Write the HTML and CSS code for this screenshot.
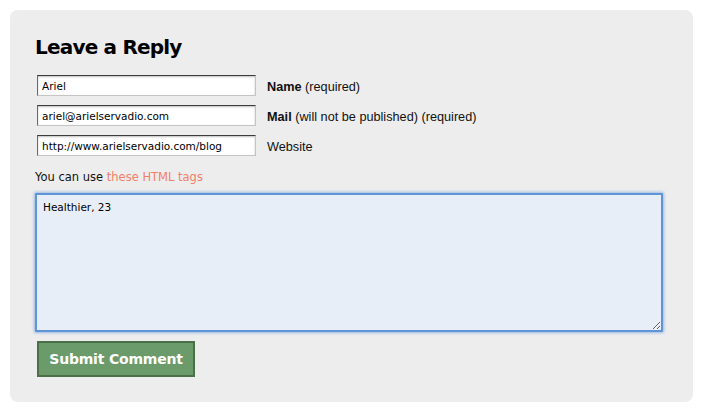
FILE: index.html
```html
<!DOCTYPE html>
<html lang="en">
<head>
    <meta charset="UTF-8">
    <title>Leave a Reply</title>
    <link rel="stylesheet" href="styles.css">
</head>
<body>

<div id="respond" class="respond">
    <h3>Leave a Reply</h3>

    <form class="comment-form">
        <p class="field">
            <input type="text" id="author" value="Ariel">
            <label for="author"><strong>Name</strong> (required)</label>
        </p>
        <p class="field">
            <input type="text" id="email" value="ariel@arielservadio.com">
            <label for="email"><strong>Mail</strong> (will not be published) (required)</label>
        </p>
        <p class="field">
            <input type="text" id="url" value="http://www.arielservadio.com/blog">
            <label for="url">Website</label>
        </p>

        <p class="tags">You can use <a href="#">these HTML tags</a></p>

        <textarea id="comment" class="focused">Healthier, 23</textarea>

        <button type="submit" class="submit-btn">Submit Comment</button>
    </form>
</div>

</body>
</html>
```

FILE: styles.css
```css
body {
    margin: 0;
    padding: 10px 9px 10px 10px;
    background: #fff;
    font-family: "Liberation Sans", Arial, sans-serif;
    font-size: 12.7px;
    color: #111;
}

.respond {
    background: #ededed;
    border-radius: 8px;
    padding: 24px 25px 24px 25px;
    height: 392px;
    box-sizing: border-box;
}

.respond h3 {
    margin: 0 0 15px 0;
    font-family: "DejaVu Sans", sans-serif;
    font-size: 20px;
    line-height: 26px;
    font-weight: bold;
    letter-spacing: -0.8px;
    color: #000;
}

.comment-form {
    margin: 0;
}

.field {
    display: flex;
    align-items: center;
    margin: 0 0 9px 2px;
    height: 21px;
}

.field input {
    width: 219px;
    height: 21px;
    box-sizing: border-box;
    margin: 0;
    padding: 1px 4px 0;
    border: 1px solid #c4c4c4;
    border-top-color: #3c3c3c;
    border-left-color: #6a6a6a;
    box-shadow: inset 0 1px 2px rgba(0, 0, 0, 0.25);
    background: #fff;
    font-family: "DejaVu Sans", sans-serif;
    font-size: 10.5px;
    color: #000;
    outline: none;
}

.field label {
    margin-left: 11px;
    padding-top: 2px;
}

.tags {
    margin: 13px 0 8px 0;
    font-family: "DejaVu Sans", sans-serif;
    font-size: 11.5px;
    line-height: 16px;
    color: #111;
}

.tags a {
    color: #f47e68;
    text-decoration: none;
}

textarea {
    display: block;
    width: 628px;
    height: 139px;
    box-sizing: border-box;
    margin: 0 0 9px 0;
    padding: 5px 6px;
    border: 2px solid #5f95d6;
    border-radius: 1px;
    box-shadow: 0 0 3px 1px rgba(100, 150, 220, 0.6);
    background: #e8eef7;
    font-family: "DejaVu Sans", sans-serif;
    font-size: 10.5px;
    line-height: 14px;
    color: #000;
    outline: none;
    resize: both;
}

.submit-btn {
    display: block;
    margin-left: 2px;
    width: 158px;
    height: 36px;
    padding: 0;
    border: 2px solid #4b6f48;
    background: #6b9b6b;
    color: #fff;
    font-family: "DejaVu Sans", sans-serif;
    font-size: 14px;
    font-weight: bold;
    letter-spacing: -0.2px;
    cursor: pointer;
}
```
